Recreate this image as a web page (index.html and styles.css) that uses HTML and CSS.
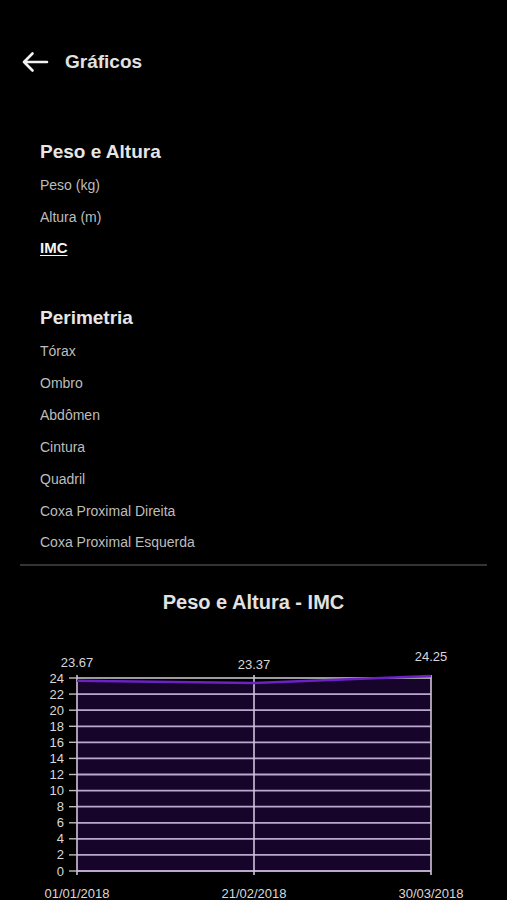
FILE: index.html
```html
<!DOCTYPE html>
<html lang="pt">
<head>
<meta charset="utf-8">
<title>Gráficos</title>
<link rel="stylesheet" href="styles.css">
</head>
<body>
<header class="topbar">
  <svg class="back" width="28" height="22" viewBox="0 0 28 22" aria-hidden="true">
    <path d="M26 11H3M11.5 2.5L3 11l8.5 8.5" fill="none" stroke="#f2f2f2" stroke-width="2.6" stroke-linecap="round" stroke-linejoin="round"/>
  </svg>
  <h1 class="title">Gráficos</h1>
</header>

<main class="menu">
  <section class="group">
    <h2 class="group-title">Peso e Altura</h2>
    <ul class="items">
      <li>Peso (kg)</li>
      <li>Altura (m)</li>
      <li class="active">IMC</li>
    </ul>
  </section>
  <section class="group">
    <h2 class="group-title">Perimetria</h2>
    <ul class="items">
      <li>Tórax</li>
      <li>Ombro</li>
      <li>Abdômen</li>
      <li>Cintura</li>
      <li>Quadril</li>
      <li>Coxa Proximal Direita</li>
      <li>Coxa Proximal Esquerda</li>
    </ul>
  </section>
</main>

<hr class="divider">

<section class="chart">
  <h2 class="chart-title">Peso e Altura - IMC</h2>
  <svg class="plot" width="507" height="285" viewBox="0 615 507 285">
    <polygon points="77,681.7 254,684 431,677 431,872 77,872" fill="#17042b"/>
    <g stroke="#bba8ce" stroke-width="1.8">
      <line x1="77" y1="872" x2="431" y2="872"/>
      <line x1="77" y1="855.9" x2="431" y2="855.9"/>
      <line x1="77" y1="839.8" x2="431" y2="839.8"/>
      <line x1="77" y1="823.8" x2="431" y2="823.8"/>
      <line x1="77" y1="807.7" x2="431" y2="807.7"/>
      <line x1="77" y1="791.6" x2="431" y2="791.6"/>
      <line x1="77" y1="775.5" x2="431" y2="775.5"/>
      <line x1="77" y1="759.4" x2="431" y2="759.4"/>
      <line x1="77" y1="743.3" x2="431" y2="743.3"/>
      <line x1="77" y1="727.3" x2="431" y2="727.3"/>
      <line x1="77" y1="711.2" x2="431" y2="711.2"/>
      <line x1="77" y1="695.1" x2="431" y2="695.1"/>
    </g>
    <line x1="77" y1="679" x2="431" y2="679" stroke="#9c9c9c" stroke-width="1.8"/>
    <g stroke="#cfc6d8" stroke-width="1.6">
      <line x1="77" y1="676" x2="77" y2="876"/>
      <line x1="254" y1="676" x2="254" y2="876"/>
      <line x1="431" y1="676" x2="431" y2="876"/>
    </g>
    <g stroke="#bdbdbd" stroke-width="1.4">
      <line x1="69" y1="872" x2="77" y2="872"/>
      <line x1="69" y1="855.9" x2="77" y2="855.9"/>
      <line x1="69" y1="839.8" x2="77" y2="839.8"/>
      <line x1="69" y1="823.8" x2="77" y2="823.8"/>
      <line x1="69" y1="807.7" x2="77" y2="807.7"/>
      <line x1="69" y1="791.6" x2="77" y2="791.6"/>
      <line x1="69" y1="775.5" x2="77" y2="775.5"/>
      <line x1="69" y1="759.4" x2="77" y2="759.4"/>
      <line x1="69" y1="743.3" x2="77" y2="743.3"/>
      <line x1="69" y1="727.3" x2="77" y2="727.3"/>
      <line x1="69" y1="711.2" x2="77" y2="711.2"/>
      <line x1="69" y1="695.1" x2="77" y2="695.1"/>
      <line x1="69" y1="679" x2="77" y2="679"/>
    </g>
    <polyline points="77,681.7 254,684 431,677" fill="none" stroke="#6b22c4" stroke-width="2.6" stroke-linejoin="round"/>
    <g class="ylabels">
      <text x="64" y="876.5">0</text>
      <text x="64" y="860.4">2</text>
      <text x="64" y="844.3">4</text>
      <text x="64" y="828.3">6</text>
      <text x="64" y="812.2">8</text>
      <text x="64" y="796.1">10</text>
      <text x="64" y="780">12</text>
      <text x="64" y="763.9">14</text>
      <text x="64" y="747.8">16</text>
      <text x="64" y="731.8">18</text>
      <text x="64" y="715.7">20</text>
      <text x="64" y="699.6">22</text>
      <text x="64" y="683.5">24</text>
    </g>
    <g class="vlabels">
      <text x="77" y="667.5">23.67</text>
      <text x="254" y="669.5">23.37</text>
      <text x="431" y="662">24.25</text>
    </g>
    <g class="xlabels">
      <text x="77" y="898.5">01/01/2018</text>
      <text x="254" y="898.5">21/02/2018</text>
      <text x="431" y="898.5">30/03/2018</text>
    </g>
  </svg>
</section>
</body>
</html>
```

FILE: styles.css
```css
html, body {
  margin: 0;
  padding: 0;
  background: #000;
}

body {
  font-family: "Liberation Sans", Arial, sans-serif;
  color: #e4e4e4;
  width: 507px;
  height: 900px;
  overflow: hidden;
}

.topbar {
  display: flex;
  align-items: center;
  height: 40px;
  margin-top: 42px;
  padding-left: 21px;
  gap: 16px;
}

.back {
  display: block;
}

.title {
  margin: 0;
  font-size: 19px;
  font-weight: 700;
  color: #e2e2e2;
}

.menu {
  padding: 53px 0 0 40px;
  display: flex;
  flex-direction: column;
  gap: 36px;
}

.group-title {
  margin: 0;
  font-size: 19px;
  line-height: 34px;
  font-weight: 700;
  color: #e6e6e6;
}

.items {
  list-style: none;
  margin: 0;
  padding: 0;
}

.items li {
  font-size: 14px;
  line-height: 32px;
  height: 32px;
  color: #bdbdbd;
}

.items li:last-child {
  line-height: 30px;
}

.items li.active {
  font-weight: 700;
  font-size: 15px;
  color: #f4f4f4;
  text-decoration: underline;
  text-underline-offset: 2px;
}

.divider {
  margin: 5px 20px 0 20px;
  border: 0;
  height: 2px;
  background: #343434;
}

.chart-title {
  margin: 24px 0 0 0;
  font-size: 20px;
  line-height: 24px;
  font-weight: 700;
  text-align: center;
  color: #e2e2e2;
}

.plot {
  display: block;
}

.plot text {
  font-family: "Liberation Sans", Arial, sans-serif;
  font-size: 13px;
  fill: #d8d8d8;
}

.ylabels text {
  text-anchor: end;
}

.vlabels text,
.xlabels text {
  text-anchor: middle;
}
```
